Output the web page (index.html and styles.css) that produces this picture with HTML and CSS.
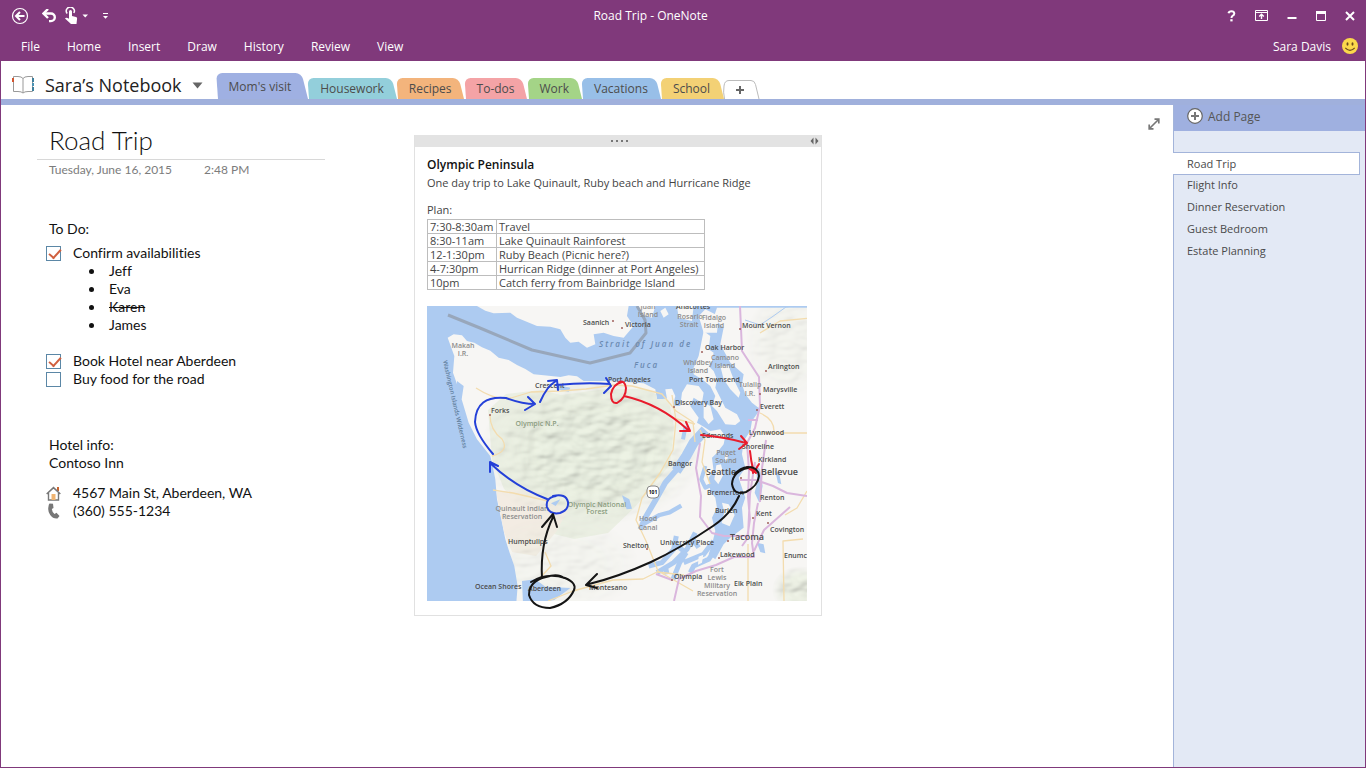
FILE: index.html
```html
<!DOCTYPE html>
<html lang="en">

<head>
    <meta charset="UTF-8">
    <meta name="viewport" content="width=device-width, initial-scale=1.0">
    <title>Road Trip - OneNote</title>
    <link rel="stylesheet" href="styles.css">
</head>

<body>
    <header class="top">
        <div class="titlebar">
            <div class="quick">
                <button type="button" aria-label="Back">
                    <svg width="18" height="18" viewBox="0 0 18 18"><circle cx="9" cy="9" r="7.5" fill="none" stroke="#fff" stroke-width="1.2"/><path d="M13.5 9H5.5M9 5L5 9l4 4" fill="none" stroke="#fff" stroke-width="2"/></svg>
                </button>
                <button type="button" class="undo" aria-label="Undo">
                    <svg width="15" height="14" viewBox="0 0 15 14"><path d="M2 4.500h7a3.800 3.800 0 0 1 0 7.600H7" fill="none" stroke="#fff" stroke-width="2.400"/><path d="M6 0L1.500 4.500 6 9" fill="none" stroke="#fff" stroke-width="2.400"/></svg>
                </button>
                <button type="button" class="touch" aria-label="Touch mode">
                    <svg width="24" height="18" viewBox="0 0 24 18"><path d="M2.200 6.500A4 4 0 1 1 8.800 6" fill="none" stroke="#fff" stroke-width="1.500"/><path d="M4 4.500a1.500 1.500 0 0 1 3 0V9l4 1q1.200.4 1.100 1.600L11.500 17H6L0 11.600q1-1.700 4 .2z" fill="#fff"/><path d="M17.500 7.500h5.500L20.200 10.500z" fill="#fff"/></svg>
                </button>
                <button type="button" class="customize" aria-label="Customize toolbar">
                    <svg width="7" height="8" viewBox="0 0 7 8"><path d="M1 1.500h5" stroke="#fff"/><path d="M1 4h5L3.500 6.800z" fill="#fff"/></svg>
                </button>
            </div>
            <div class="app-title">Road Trip - OneNote</div>
            <div class="window-buttons">
                <button type="button" aria-label="Help">
                    <svg width="9" height="12" viewBox="0 0 9 12"><path d="M1.500 3.300Q2 1.200 4.500 1.200T7.300 3.400Q7.300 5 5.500 5.800 4.500 6.300 4.500 8" fill="none" stroke="#fff" stroke-width="2"/><path d="M3.300 9.200h2.300v2.200H3.300z" fill="#fff"/></svg>
                </button>
                <button type="button" aria-label="Ribbon display options">
                    <svg width="13" height="11" viewBox="0 0 13 11"><path d="M.5.5h12v10H.5zM.5 2.500h12" fill="none" stroke="#fff"/><path d="M6.500 9V5M4.200 6.400L6.500 4.200l2.300 2.200" fill="none" stroke="#fff" stroke-width="1.400"/></svg>
                </button>
                <button type="button" aria-label="Minimize">
                    <svg width="10" height="11" viewBox="0 0 10 11"><path d="M.5 7h9v2h-9z" fill="#fff"/></svg>
                </button>
                <button type="button" aria-label="Maximize">
                    <svg width="10" height="10" viewBox="0 0 10 10"><path d="M.5.5h9v9h-9z" fill="none" stroke="#fff"/><path d="M0 0h10v3H0z" fill="#fff"/></svg>
                </button>
                <button type="button" aria-label="Close">
                    <svg width="10" height="10" viewBox="0 0 10 10"><path d="M1 1l8 8M9 1L1 9" stroke="#fff" stroke-width="2"/></svg>
                </button>
            </div>
        </div>
        <div class="menubar">
            <nav class="menu">
                <button type="button">File</button>
                <button type="button">Home</button>
                <button type="button">Insert</button>
                <button type="button">Draw</button>
                <button type="button">History</button>
                <button type="button">Review</button>
                <button type="button">View</button>
            </nav>
            <div class="user">
                <span>Sara Davis</span>
                <svg width="16" height="16" viewBox="0 0 16 16"><circle cx="8" cy="8" r="8" fill="#fbd84b"/><ellipse cx="5.500" cy="6" rx="1" ry="1.700" fill="#6b4a1c"/><ellipse cx="10.500" cy="6" rx="1" ry="1.700" fill="#6b4a1c"/><path d="M3.300 9.800q4.700 5 9.400 0" fill="none" stroke="#6b4a1c" stroke-width="1.200"/></svg>
            </div>
        </div>
    </header>

    <div class="sections">
        <button type="button" class="notebook">
            <svg width="24" height="20" viewBox="0 0 24 20"><path d="M12 3.500Q10.500 1.500 7 1.500H2.500v15H7q3.500 0 5 1.500 1.500-1.500 5-1.500h4.500v-15H17q-3.500 0-5 2zV18" fill="#fff" stroke="#999"/><path d="M1 3h2v4H1z" fill="#d2552f"/><path d="M21 3h2v4h-2zM21 12h2v4h-2z" fill="#3f7f9c"/><path d="M21 8h2v3h-2z" fill="#4a93b5"/></svg>
            <span>Sara’s Notebook</span>
            <svg class="caret" width="11" height="7" viewBox="0 0 11 7"><path d="M.5.500h10L5.500 6.500z" fill="#666"/></svg>
        </button>
        <nav class="tabs">
            <button type="button" class="tab blue active">Mom's visit</button>
            <button type="button" class="tab teal">Housework</button>
            <button type="button" class="tab orange">Recipes</button>
            <button type="button" class="tab pink">To-dos</button>
            <button type="button" class="tab green">Work</button>
            <button type="button" class="tab sky">Vacations</button>
            <button type="button" class="tab yellow">School</button>
            <button type="button" class="tab-add" aria-label="New section">
                <svg width="38" height="19" viewBox="0 0 38 19"><path d="M1.500 19Q0 12 1 6 1.500.5 6 .5h22q3.500 0 4.500 4L36 19" fill="#fff" stroke="#bbb"/><path d="M17 6v8M13 10h8" stroke="#666" stroke-width="2"/></svg>
            </button>
        </nav>
    </div>

    <div class="workspace">
        <main class="page">
            <div class="notes">
                <h1>Road Trip</h1>
                <div class="stamp"><span>Tuesday, June 16, 2015</span><span>2:48 PM</span></div>

                <p class="todo-title">To Do:</p>
                <label class="todo"><input type="checkbox" checked>Confirm availabilities</label>
                <ul>
                    <li>Jeff</li>
                    <li>Eva</li>
                    <li><s>Karen</s></li>
                    <li>James</li>
                </ul>
                <label class="todo"><input type="checkbox" checked>Book Hotel near Aberdeen</label>
                <label class="todo"><input type="checkbox">Buy food for the road</label>

                <p class="hotel">Hotel info:<br>Contoso Inn</p>
                <div class="contact">
                    <svg width="15" height="15" viewBox="0 0 15 15"><path d="M2.500 7v7h10V7" fill="#fff" stroke="#777" stroke-width="1.400"/><path d="M11 1h2v4h-2z" fill="#c8642f"/><path d="M.7 8L7.500 1.700 14.300 8" fill="none" stroke="#777" stroke-width="1.600"/><path d="M5.500 8h4v6h-4z" fill="#f0b472"/></svg>
                    4567 Main St, Aberdeen, WA
                </div>
                <div class="contact">
                    <svg width="15" height="16" viewBox="0 0 15 16"><path d="M3.500.5L7 .8 7.500 5 5.800 6q.3 3 2.700 5l2-1.200 3 3.200-2 2.500Q7 16 4.200 12T2.500 3.500Q2.600 1.500 3.500.5z" fill="#777"/></svg>
                    (360) 555-1234
                </div>
            </div>

            <section class="card">
                <div class="grip">
                    <svg width="20" height="4" viewBox="0 0 20 4"><path d="M3 1h2v2H3zM8 1h2v2H8zM13 1h2v2h-2zM18 1h2v2h-2z" fill="#777"/></svg>
                    <svg class="sizer" width="9" height="8" viewBox="0 0 9 8"><path d="M3.500.5v7L.5 4zM5.500.5v7L8.500 4z" fill="#666"/></svg>
                </div>
                <div class="card-body">
                    <h2>Olympic Peninsula</h2>
                    <p>One day trip to Lake Quinault, Ruby beach and Hurricane Ridge</p>
                    <p class="plan">Plan:</p>
                    <table>
                        <tbody>
                            <tr><td>7:30-8:30am</td><td>Travel</td></tr>
                            <tr><td>8:30-11am</td><td>Lake Quinault Rainforest</td></tr>
                            <tr><td>12-1:30pm</td><td>Ruby Beach (Picnic here?)</td></tr>
                            <tr><td>4-7:30pm</td><td>Hurrican Ridge (dinner at Port Angeles)</td></tr>
                            <tr><td>10pm</td><td>Catch ferry from Bainbridge Island</td></tr>
                        </tbody>
                    </table>

                    <svg class="map" width="380" height="295" viewBox="427 306 380 295">
                        <defs>
                            <clipPath id="frame"><path d="M427 306h380v295H427z"/></clipPath>
                            <clipPath id="land"><path id="coast" transform="translate(427 306) scale(.3333)" d="M62 95L80 85l25 3 15 17 22 5 23 14 25 10 25 21 30 7 25 15 25 12 25 16 45 4 35 4 25-5 25 3 20 14 70 0 60 3 50 4 35 18 5 30 30-2-5-28 20-2 10 22-7 30 22 0 5-40 15-25 35 5 15 20-5 30-25-15-10 25 25 35-5 15 25 15 15 10 30-5 15 20-5 25-20 25-15 15 5 40-15 20 5 40 15 20 5 30-15 30 10 40-10 40-10 30 20 15 25-45 20-20 40-30-5-60 10-30-10-30-10-30 20-30-10-40 5-40 20-30 5-30 25-35-25-20-20-25-10-30 5-30-40-35-30-55 10-50-30-30 10-30H1145V890H268L272 840l-10-60-14-40-13-40-10-50-15-70-5-60-8-40-7-30-40-50-25-50-15-50-18-60-14-40 4-50z"/></clipPath>
                            <radialGradient id="fade"><stop offset=".5" stop-color="#fff"/><stop offset="1" stop-color="#fff" stop-opacity="0"/></radialGradient>
                            <mask id="hills">
                                <ellipse cx="592" cy="450" rx="112" ry="76" fill="url(#fade)" opacity=".8"/>
                                <ellipse cx="787" cy="345" rx="42" ry="56" fill="url(#fade)" opacity=".3"/>
                                <ellipse cx="560" cy="565" rx="80" ry="50" fill="url(#fade)" opacity=".25"/>
                                <ellipse cx="800" cy="590" rx="28" ry="24" fill="url(#fade)" opacity=".8"/>
                            </mask>
                            <filter id="relief" x="0" y="0" width="100%" height="100%">
                                <feTurbulence type="fractalNoise" baseFrequency=".055 .085" numOctaves="2" seed="4"/>
                                <feDiffuseLighting surfaceScale="3" diffuseConstant="1.100" lighting-color="#e4eadb"><feDistantLight azimuth="235" elevation="62"/></feDiffuseLighting>
                            </filter>
                        </defs>

                        <g clip-path="url(#frame)">
                            <path d="M427 306h380v295H427z" fill="#adcbf1"/>
                            <use href="#coast" fill="#f7f6f4"/>

                            <!-- Vancouver Island, the San Juans, Whidbey and Camano -->
                            <g transform="translate(427 306) scale(.3333)" fill="#f7f6f4">
                                <path d="M150 0l25 14 25 8 50-2 20 15 60 25 40 2 30 8 15 25 15 15 25-3 25 18 25-10-5-30 30-5 30 10 30 5 30-35-20-30 5-30z"/>
                                <path d="M630 0l10 25 35 10 10-35zM750 0l5 35 40 10 5-45zM815 30l20-20 40 20-5 50-40 0zM700 15l15-10 10 20-15 10z"/>
                                <path d="M830 75l20 15-5 40 15 10-5 25-10 15 15 15 10 25-5 25 15 30 15 30 35 20 10 20-15 12-30-2-25-40-15-15 10-30-15-30-25-20-25-15 0-20 15-35z"/>
                                <path d="M880 180h25l15 40 20 40-5 15-25-25-20-30zM830 290l20 10 10 40-15 15-15-20z"/>
                            </g>

                            <!-- national park and reservation -->
                            <g clip-path="url(#land)">
                                <path d="M488 410l18-16 35-4 20 5 45-6 40 0 23 12 5 26-4 37-20 26-16 18-26 25-34 6-24-6-20-22-26-22-12-30z" fill="#ebefe3"/>
                                <path d="M496 492l28-4 26 12 18 10-12 22-20 24-24-4-8-20z" fill="#f3ece3"/>
                                <g mask="url(#hills)"><path d="M427 306h380v295H427z" filter="url(#relief)"/></g>
                            </g>

                            <!-- canals, inlets and lakes -->
                            <g transform="translate(427 306) scale(.3333)">
                                <g fill="none" stroke="#adcbf1" stroke-linejoin="round">
                                    <path d="M835 372l-35 38-22 40-30 45" stroke-width="30"/>
                                    <path d="M750 490l-35 40-25 45-35 60-15 35" stroke-width="17"/>
                                    <path d="M648 655l50-28 30-8 35-20" stroke-width="13"/>
                                    <path d="M768 400l8-40M835 480l-12 40 12 25 22-10" stroke-width="12"/>
                                    <path d="M665 780l40-10 35-40 8-40M690 800l50-30 40-40 25-50M738 820l20-50 20-30M770 770l60-25 30-40M790 800l10-20 45-20 20-30M715 780l5 25M745 715l25 20M795 695l20 30" stroke-width="15"/>
                                </g>
                                <g fill="#f7f6f4">
                                    <path d="M868 478l14-3 8 30-16 30-12-15zM885 590l20 5 18 32-15 34-24-10 8-32zM895 445l8 2-2 18-8-4zM815 752l14-6-4 24-12 6z"/>
                                </g>
                                <g fill="#adcbf1">
                                    <path d="M985 475l14 15 8 50-10 50-14-30 8-35zM1045 495l12 8 6 32-10-4zM990 710l20 5 5 27-15-4zM395 238l35 7-5 12-37-7zM90 225l20 15-6 40-14-20zM585 568l22 12 8 28-16 2zM372 592l28-12-14 20z"/>
                                    <path d="M285 825l40-5 30 22 75 4-48 36-52 10h-42z"/>
                                </g>
                            </g>

                            <g fill="none" stroke-linejoin="round">
                                <g stroke="#f3dcae" stroke-width="1.300">
                                    <path d="M490 415q0 15 12 24 8 12-10 17M476 388q20 13 35 10l20-6 30-1 25-2 28-4 18 1 30 8 14 17 17 11 2 20"/>
                                    <path d="M672 395l4 25-3 30-13 23-18 25-6 22 10 21 12 30 35 20M493 490l20 3 35 8M548 601l25-10 40-11 30-1 14-7 27 3"/>
                                    <path d="M673 418l22 6M700 430l5 10-3 22 8 22M760 413q14 6 14 18M762 433h45M760 333l20-12 30-3M785 515l12-7 10-17M748 601v-57M784 601l-1-60 20-2M540 578l11-12-6-14"/>
                                </g>
                                <g stroke="#dab6dd" stroke-width="2">
                                    <path d="M740 306l2 45 17 26 1 29-5 22-8 15 2 28-1 26 2 22-3 20-5 7M700 443l-4 25 5 28-1 21 12 16 12 3h24l2-42 5-32"/>
                                    <path d="M740 480h16l17 6 14 7 20 3M758 503l-4 20-2 20 2 14h-20l-18 8-20 6-17 8-5 22M766 440l-4 28-2 34M790 507l-26 23-10 21M748 420h10M656 574l16 6"/>
                                </g>
                                <path d="M745 320l15 5 12-8 14-10 20-3" stroke="#adcbf1"/>
                                <path d="M448 315l32 13 52 22 58 13 40-10 16-20-1-13-8-14" stroke="#98a7bb" stroke-width="3"/>
                            </g>

                            <g class="label">
                                <text x="583" y="325">Saanich</text><text x="625" y="327">Victoria</text>
                                <text x="742" y="328">Mount Vernon</text><text x="705" y="350">Oak Harbor</text>
                                <text x="768" y="369">Arlington</text><text x="689" y="382">Port Townsend</text>
                                <text x="763" y="392">Marysville</text><text x="675" y="405">Discovery Bay</text>
                                <text x="760" y="409">Everett</text><text x="608" y="382">Port Angeles</text>
                                <text x="535" y="388">Crescent</text><text x="491" y="413">Forks</text>
                                <text x="702" y="438">Edmonds</text><text x="749" y="435">Lynnwood</text>
                                <text x="742" y="449">Shoreline</text><text x="758" y="462">Kirkland</text>
                                <text x="668" y="466">Bangor</text><text x="707" y="495">Bremerton</text>
                                <text x="760" y="500">Renton</text><text x="715" y="513">Burien</text>
                                <text x="756" y="516">Kent</text><text x="770" y="532">Covington</text>
                                <text x="660" y="545">University Place</text><text x="623" y="548">Shelton</text>
                                <text x="720" y="557">Lakewood</text><text x="784" y="558">Enumclaw</text>
                                <text x="674" y="579">Olympia</text><text x="734" y="586">Elk Plain</text>
                                <text x="589" y="590">Montesano</text><text x="528" y="591">Aberdeen</text>
                                <text x="475" y="589">Ocean Shores</text><text x="508" y="544">Humptulips</text>
                                <text x="676" y="309">Anacortes</text>
                            </g>
                            <g class="label city">
                                <text x="706" y="475">Seattle</text><text x="761" y="475">Bellevue</text><text x="730" y="540">Tacoma</text>
                            </g>
                            <g class="label area">
                                <text x="463" y="348">Makah</text><text x="463" y="356">I.R.</text>
                                <text x="537" y="426" class="park">Olympic N.P.</text>
                                <text x="597" y="507" class="park">Olympic National</text><text x="597" y="514" class="park">Forest</text>
                                <text x="522" y="511">Quinault Indian</text><text x="522" y="519">Reservation</text>
                                <text x="648" y="309">Juan</text><text x="648" y="317">Island</text>
                                <text x="690" y="319">Rosario</text><text x="689" y="327">Strait</text>
                                <text x="714" y="320">Fidalgo</text><text x="714" y="328">Island</text>
                                <text x="698" y="365">Whidbey</text><text x="698" y="373">Island</text>
                                <text x="725" y="360">Camano</text><text x="725" y="368">Island</text>
                                <text x="750" y="387">Tulalip</text><text x="750" y="396">I.R.</text>
                                <text x="726" y="455">Puget</text><text x="726" y="463">Sound</text>
                                <text x="648" y="521">Hood</text><text x="648" y="530">Canal</text>
                                <text x="717" y="572">Fort</text><text x="717" y="580">Lewis</text>
                                <text x="717" y="588">Military</text><text x="717" y="596">Reservation</text>
                                <text transform="translate(443 361) rotate(77)" class="wild">Washington Islands Wilderness</text>
                            </g>
                            <g class="label strait">
                                <text x="599" y="347">Strait of Juan de</text><text x="634" y="368">Fuca</text>
                            </g>
                            <rect x="647" y="486" width="12" height="12" rx="4" fill="#fff" stroke="#888"/>
                            <text x="653" y="494" class="shield">101</text>
                            <g fill="#a0605d">
                                <circle cx="613" cy="321" r="1"/><circle cx="622" cy="328" r="1"/><circle cx="740" cy="329" r="1"/><circle cx="702" cy="352" r="1"/><circle cx="766" cy="371" r="1"/><circle cx="760" cy="394" r="1"/><circle cx="757" cy="410" r="1"/><circle cx="674" cy="407" r="1"/><circle cx="490" cy="415" r="1"/><circle cx="741" cy="478" r="1"/><circle cx="753" cy="518" r="1"/><circle cx="768" cy="523" r="1"/><circle cx="728" cy="541" r="1"/><circle cx="719" cy="558" r="1"/><circle cx="672" cy="580" r="1"/><circle cx="647" cy="549" r="1"/>
                            </g>
                        </g>

                        <!-- ink strokes -->
                        <g class="ink blue-ink">
                            <path d="M547 499q-32-12-57-36M490 472v-10l8 4"/>
                            <path d="M493 454q-17-20-18-32 1-27 31-24 16 6 29 6M528 397l7 7-10 6M540 402q7-16 16-21M548 381l9-1 1 10M556 385q30-3 54-1M606 378l5 8-7 7"/>
                            <path d="M556 496q-11 2-9 11 3 8 13 6 9-3 8-11-2-9-15-6"/>
                        </g>
                        <g class="ink red-ink">
                            <path d="M622 382q-9 2-11 12 0 10 6 9 9-5 9-15-1-8-7-6M624 396q36 8 64 34M686 422l4 9-10 0M701 435q24 2 45 8M741 436l6 7-8 6M750 451q1 10 3 18M747 467l7 5 5-8M751 467l5 6M752 464l1 9"/>
                        </g>
                        <g class="ink black-ink">
                            <path d="M542 578q-2-34 11-61M542 527l11-13 4 13"/>
                            <path d="M531 582q16-10 34-4 12 5 9 12-6 14-24 18-17 0-21-13 0-14 17-18 12-4 18 1"/>
                            <path d="M748 468q-15 3-16 16 2 12 14 8 12-6 13-16-1-9-11-9-8 1-13 7M739 496q-8 18-26 30-34 23-62 36-33 15-62 22M597 574l-11 11 11 3"/>
                        </g>
                    </svg>
                </div>
            </section>

            <button type="button" class="expand" aria-label="Full page view">
                <svg width="12" height="12" viewBox="0 0 12 12"><path d="M2 10l8-8M6.500 1.200H10.800V5.500M1.200 6.500V10.800H5.500" fill="none" stroke="#777" stroke-width="1.700"/></svg>
            </button>
        </main>

        <aside class="pages">
            <button type="button" class="add-page">
                <svg width="16" height="16" viewBox="0 0 16 16"><circle cx="8" cy="8" r="7.300" fill="#fff" stroke="#666" stroke-width="1.200"/><path d="M8 4v8M4 8h8" stroke="#777" stroke-width="2"/></svg>
                Add Page
            </button>
            <nav class="page-list">
                <a href="#" class="current">Road Trip</a>
                <a href="#">Flight Info</a>
                <a href="#">Dinner Reservation</a>
                <a href="#">Guest Bedroom</a>
                <a href="#">Estate Planning</a>
            </nav>
        </aside>
    </div>
</body>

</html>
```
FILE: styles.css
```css
* {
    box-sizing: border-box;
}

body {
    margin: 0;
    min-height: 100vh;
    display: flex;
    flex-direction: column;
    border: 1px solid #80397b;
    border-top: none;
    font-family: "Open Sans", "Noto Sans", sans-serif;
    font-size: 12px;
    color: #444;
    background-color: #fff;
}

button {
    padding: 0;
    border: none;
    background: none;
    font: inherit;
    color: inherit;
    cursor: pointer;
}

svg {
    display: block;
}

h1,
h2,
p,
ul {
    margin: 0;
    padding: 0;
    font-weight: normal;
}

/* title bar and menu */
.top {
    background-color: #80397b;
    color: #fff;
}

.titlebar {
    display: grid;
    grid-template-columns: 9fr auto 10fr;
    align-items: center;
    height: 31px;
    padding: 0 10px;
}

.quick {
    display: flex;
    align-items: center;
}

.undo {
    margin-left: 13px;
}

.touch {
    margin-left: 8px;
}

.customize {
    margin-left: 13px;
}

.window-buttons {
    display: flex;
    justify-content: flex-end;
    align-items: center;
    gap: 19px;
}

.menubar {
    display: flex;
    justify-content: space-between;
    align-items: center;
    height: 30px;
    padding: 0 7px 0 20px;
}

.menu {
    display: flex;
    gap: 27px;
}

.user {
    display: flex;
    align-items: center;
    gap: 11px;
}

/* notebook name and section tabs */
.sections {
    display: flex;
    align-items: flex-end;
    height: 44px;
    border-bottom: 6px solid #a0b0dc;
}

.notebook {
    display: flex;
    align-items: center;
    height: 28px;
    padding-left: 10px;
    font-size: 18px;
    color: #222;
}

.notebook span {
    margin-left: 10px;
}

.caret {
    margin-left: 10px;
}

.tabs {
    display: flex;
    align-items: flex-end;
    margin-left: 14px;
}

.tab {
    position: relative;
    z-index: 0;
    height: 21px;
    padding: 0 13px 0 12px;
    color: #4c4c4c;
}

.tab.active {
    height: 26px;
    padding-right: 17px;
}

.tab::before,
.tab::after {
    content: "";
    position: absolute;
    z-index: -1;
    top: 0;
    bottom: 0;
    background-color: var(--tab);
}

.tab::before {
    left: 1px;
    width: 50%;
    border-top-left-radius: 6px;
    transform: skewX(4deg);
    transform-origin: bottom;
}

.tab::after {
    left: 30%;
    right: 0;
    border-top-right-radius: 6px;
    transform: skewX(14deg);
    transform-origin: bottom;
}

.blue { --tab: #9fb0e2; }
.teal { --tab: #93cfdb; }
.orange { --tab: #f3b47c; }
.pink { --tab: #f4a3a6; }
.green { --tab: #a4d487; }
.sky { --tab: #98bfe8; }
.yellow { --tab: #f3d175; }

/* page canvas */
.workspace {
    display: flex;
    flex: 1;
}

.page {
    flex: 1;
    display: flex;
    align-items: flex-start;
}

.notes {
    flex: 0 0 288px;
    margin-left: 36px;
    padding-top: 20px;
    font-family: Lato, "Liberation Sans", sans-serif;
    font-size: 14px;
    font-variant-ligatures: none;
    line-height: 18px;
    color: #111;
}

h1 {
    padding: 0 0 4px 12px;
    border-bottom: 1px solid #d8d8d8;
    font-size: 26px;
    font-weight: 300;
    line-height: 30px;
}

.stamp {
    display: flex;
    gap: 32px;
    padding-left: 12px;
    font-size: 12px;
    line-height: 20px;
    color: #7c7c7c;
}

.todo-title {
    margin: 40px 0 6px 12px;
}

.todo {
    display: flex;
    align-items: center;
    gap: 12px;
    margin-left: 9px;
}

.todo input {
    appearance: none;
    width: 15px;
    height: 15px;
    margin: 0;
    border: 1px solid #5b87a6;
    background-color: #fff;
}

.todo input:checked::before {
    content: "";
    display: block;
    width: 10px;
    height: 5px;
    margin: 2px 0 0 2px;
    border-left: 2px solid #d0603f;
    border-bottom: 2px solid #d0603f;
    transform: rotate(-48deg);
}

.notes ul {
    margin: 0 0 18px 68px;
    list-style: disc;
}

.notes li {
    padding-left: 4px;
}

.hotel {
    margin: 48px 0 12px 12px;
}

.contact {
    display: flex;
    align-items: center;
    gap: 12px;
    margin-left: 9px;
}

.card {
    width: 408px;
    margin: 30px 0 0 89px;
    border: 1px solid #e1e1e1;
    border-top: none;
    color: #444;
}

.grip {
    display: flex;
    align-items: center;
    justify-content: center;
    position: relative;
    height: 12px;
    background-color: #e3e3e3;
}

.sizer {
    position: absolute;
    right: 2px;
}

.card-body {
    padding: 9px 14px 14px 12px;
    font-size: 11px;
    line-height: 18px;
}

.card h2 {
    font-size: 12px;
    font-weight: 600;
    color: #111;
}

.plan {
    margin-top: 9px;
}

.card table {
    width: 278px;
    border-collapse: collapse;
    line-height: 13px;
}

.card td {
    padding: 0 2px;
    border: 1px solid #bdbdbd;
    white-space: nowrap;
}

.card td:first-child {
    width: 69px;
}

/* map */
.map {
    margin-top: 16px;
    overflow: visible;
}

.label {
    font-size: 7px;
    font-weight: 600;
    fill: #4c4c4c;
}

.city {
    font-size: 9px;
}

.area {
    fill: #8c8c8c;
    text-anchor: middle;
}

.area .park {
    fill: #8b9c80;
}

.area .wild {
    font-size: 6px;
    text-anchor: start;
    fill: #5f7d9c;
}

.strait {
    font-size: 8px;
    font-style: italic;
    letter-spacing: 2px;
    fill: #6a89b0;
}

.shield {
    font-size: 5px;
    font-weight: 700;
    text-anchor: middle;
}

.ink {
    fill: none;
    stroke-width: 2;
    stroke-linecap: round;
    stroke-linejoin: round;
}

.blue-ink {
    stroke: #2440d8;
}

.red-ink {
    stroke: #e81c2c;
}

.black-ink {
    stroke: #151515;
}

.expand {
    margin: 13px 13px 0 auto;
}

/* page list */
.pages {
    flex: 0 0 192px;
    border-left: 1px solid #a3b4da;
    background-color: #e3e9f5;
}

.add-page {
    display: flex;
    align-items: center;
    gap: 5px;
    width: 100%;
    height: 26px;
    padding: 0 0 4px 13px;
    background-color: #9fb0e0;
    color: #555;
}

.page-list {
    display: flex;
    flex-direction: column;
    padding-top: 21px;
    font-size: 11px;
}

.page-list a {
    padding-left: 13px;
    line-height: 22px;
    color: #4a4a4a;
    text-decoration: none;
}

.page-list .current {
    margin: 0 5px -1px -1px;
    padding-left: 14px;
    border: 1px solid #a3b4da;
    border-left: none;
    line-height: 21px;
    background-color: #fff;
}
```
